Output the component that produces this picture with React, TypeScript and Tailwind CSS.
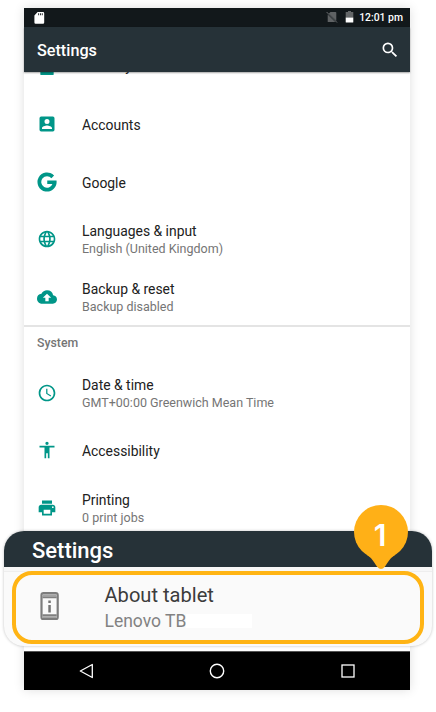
import type { ReactNode } from "react";

const TEAL = "#009688";

function Icon({ children, size = 20 }: { children: ReactNode; size?: number }) {
  return (
    <svg width={size} height={size} viewBox="0 0 24 24" fill={TEAL}>
      {children}
    </svg>
  );
}

type RowProps = {
  icon: ReactNode;
  title: string;
  subtitle?: string;
};

function Row({ icon, title, subtitle }: RowProps) {
  return (
    <div className="flex h-[57.5px] shrink-0 items-center">
      <div className="flex w-[45px] shrink-0 justify-center pb-[2px]">{icon}</div>
      <div className="pl-[13px]">
        <div className="whitespace-nowrap text-[13.900px] leading-[18px] text-[#212121]">{title}</div>
        {subtitle && (
          <div className="whitespace-nowrap text-[12.5px] leading-[18px] text-[#757575]">{subtitle}</div>
        )}
      </div>
    </div>
  );
}

function StatusBar() {
  return (
    <div className="flex h-[19px] shrink-0 items-center bg-[#12181b] pl-[9.5px] pr-[7px] text-white">
      <svg width="11" height="12" viewBox="0 0 11 12">
        <path d="M3.600 0H9a1.200 1.200 0 0 1 1.200 1.200v9.400A1.200 1.200 0 0 1 9 11.800H1.600A1.200 1.200 0 0 1 .4 10.600V3.400z" fill="#fff" />
        <path d="M4.200 1.200h.9v2h-.9zM6 1.200h.9v2H6zM7.800 1.200h.9v2h-.9z" fill="#12181b" />
      </svg>
      <div className="flex-1" />
      <svg className="-mt-0.5 mr-[7px]" width="12" height="12" viewBox="0 0 12 12">
        <path d="M4.500 1H9.500a.8.8 0 0 1 .8.8v8L2.800 2.600zM1.700 3.600 9.300 11H1.700z" fill="#5f6264" />
        <path d="M.6 1l10.400 10.500" stroke="#6b6e70" strokeWidth="1" />
      </svg>
      <svg className="-mt-0.5 mr-[5px]" width="9" height="12" viewBox="0 0 9 12">
        <path d="M3 0h3v1h2.300v5.500H.7V1H3z" fill="#646769" />
        <path d="M.7 6.500h7.600V11a.6.600 0 0 1-.6.600H1.300A.6.600 0 0 1 .7 11z" fill="#fff" />
      </svg>
      <span className="pt-[2px] text-[10.4px] font-medium leading-none">12:01 pm</span>
    </div>
  );
}

function AppBar() {
  return (
    <div className="z-10 flex h-[45px] shrink-0 items-center justify-between bg-[#263238] pl-[13px] pr-[10px] shadow-[0_1px_1.5px_rgba(0,0,0,0.35)]">
      <h1 className="pt-[4px] text-[16.200px] font-medium leading-none text-white">Settings</h1>
      <svg width="20" height="20" viewBox="0 0 24 24" fill="#fff">
        <path d="M15.500 14h-.79l-.28-.27A6.470 6.470 0 0 0 16 9.500 6.500 6.500 0 1 0 9.500 16c1.610 0 3.090-.59 4.230-1.570l.27.280v.790l5 4.990L20.490 19l-4.990-5zm-6 0C7.010 14 5 11.990 5 9.500S7.010 5 9.500 5 14 7.010 14 9.500 11.990 14 9.500 14z" />
      </svg>
    </div>
  );
}

function NavBar() {
  return (
    <div className="flex h-[39px] shrink-0 items-center justify-between border-t border-[#555] bg-black pl-[55px] pr-[54px]">
      <svg width="15" height="16" viewBox="0 0 15 16" fill="none" stroke="#fff" strokeWidth="1.300" strokeLinejoin="round">
        <path d="M13.300 1.500v13L1.300 8z" />
      </svg>
      <svg width="16" height="16" viewBox="0 0 16 16" fill="none" stroke="#fff" strokeWidth="1.400">
        <circle cx="8" cy="8" r="6.700" />
      </svg>
      <svg width="16" height="16" viewBox="0 0 16 16" fill="none" stroke="#fff" strokeWidth="1.300">
        <rect x="2" y="2" width="12" height="12" />
      </svg>
    </div>
  );
}

function Callout() {
  return (
    <section className="absolute left-[4px] top-[531px] flex h-[115px] w-[428px] flex-col overflow-hidden rounded-[20px] bg-[#fafafa] shadow-[0_0_3px_rgba(0,0,0,0.25)]">
      <div className="flex h-[36px] shrink-0 items-center bg-[#263238] pl-[28px] pt-[3px] text-[22px] font-medium leading-none text-white">
        Settings
      </div>
      <div className="h-[5px] shrink-0 border-b border-[#eeeeee] bg-[#f7f7f7]" />
      <div className="ml-[7.5px] mr-[8.5px] -mt-px flex h-[72.500px] items-center rounded-[20px] border-4 border-[#ffb414] pl-[24px]">
        <svg className="-mt-[3px]" width="20" height="28" viewBox="0 0 20 28">
          <rect x="1.500" y="1.200" width="16.200" height="26" rx="2" fill="none" stroke="#7d7d7d" strokeWidth="2.200" />
          <path d="M2.500 4.200h14.200v2H2.500zM2.500 22.200h14.200v2H2.500z" fill="#808080" />
          <path d="M2.600 2.300h14v1.900h-14zM2.600 24.200h14v1.900h-14z" fill="#a3a3a3" />
          <path d="M8.300 8.500h2.500v2.500H8.300zM8.300 13h2.500v7.500H8.300z" fill="#757575" />
        </svg>
        <div className="ml-[45px] pt-[2px]">
          <div className="whitespace-nowrap text-[20.100px] leading-[26px] text-[#3c3c3c]">About tablet</div>
          <div className="flex items-center text-[17.500px] leading-[26px] text-[#828282]">
            Lenovo TB
            <span className="h-[14px] w-[66px] bg-white" />
          </div>
        </div>
      </div>
    </section>
  );
}

function StepPin() {
  return (
    <div className="absolute left-[354px] top-[505px] h-[65px] w-[54px]">
      <svg className="absolute inset-0" width="54" height="65" viewBox="0 0 54 65">
        <circle cx="27" cy="27" r="27" fill="#ffb017" />
        <path d="M12.500 49.800C18 53 19.500 56.500 23 61.500Q27 66.500 31 61.500C34.500 56.500 36 53 41.500 49.800L27 40z" fill="#ffb017" />
      </svg>
      <span className="absolute left-0 right-[2px] top-[12px] text-center font-['Inter',sans-serif] text-[30px] font-semibold leading-[36px] text-white">1</span>
    </div>
  );
}

export default function App() {
  return (
    <main className="relative h-[712px] w-[436px] overflow-hidden bg-white px-[24px] pt-[8px] font-['Roboto',sans-serif]">
      <div className="flex h-[682px] w-[386px] flex-col bg-white shadow-[0_0_10px_rgba(0,0,0,0.13)]">
        <StatusBar />
        <AppBar />
        <div className="flex min-h-0 flex-1 flex-col overflow-hidden">
          <div className="-mt-[34.500px] mb-[1.300px] shrink-0">
            <Row title="Security" icon={<Icon><path d="M4 2h16v21a1 1 0 0 1-1 1H5a1 1 0 0 1-1-1z" /></Icon>} />
          </div>
          <Row
            title="Accounts"
            icon={<Icon><path d="M3 5v14a2 2 0 0 0 2 2h14a2 2 0 0 0 2-2V5a2 2 0 0 0-2-2H5a2 2 0 0 0-2 2zm12 4a3 3 0 1 1-6 0 3 3 0 0 1 6 0zm-9 8c0-2 4-3.100 6-3.100s6 1.100 6 3.100v1H6v-1z" /></Icon>}
          />
          <Row
            title="Google"
            icon={
              <Icon>
                <path d="M20.500 4.200A11.500 11.500 0 1 0 23.400 10.200H12.300v4.200h6.200A6.900 6.900 0 1 1 17.300 7.600z" />
              </Icon>
            }
          />
          <Row
            title="Languages & input"
            subtitle="English (United Kingdom)"
            icon={<Icon><path d="M11.990 2C6.470 2 2 6.480 2 12s4.470 10 9.990 10C17.520 22 22 17.520 22 12S17.520 2 11.990 2zm6.930 6h-2.950a15.650 15.650 0 0 0-1.380-3.560A8.030 8.030 0 0 1 18.920 8zM12 4.040c.83 1.200 1.480 2.530 1.910 3.960h-3.820c.43-1.430 1.080-2.760 1.910-3.960zM4.260 14C4.100 13.360 4 12.690 4 12s.1-1.360.26-2h3.380c-.08.66-.14 1.320-.14 2s.06 1.340.14 2H4.260zm.82 2h2.950c.32 1.250.78 2.450 1.380 3.560A7.987 7.987 0 0 1 5.080 16zm2.950-8H5.080a7.987 7.987 0 0 1 4.330-3.560A15.650 15.650 0 0 0 8.030 8zM12 19.960c-.83-1.200-1.480-2.530-1.910-3.960h3.820c-.43 1.430-1.080 2.760-1.910 3.960zM14.340 14H9.660c-.09-.66-.16-1.320-.16-2s.07-1.350.16-2h4.680c.09.65.16 1.320.16 2s-.07 1.340-.16 2zm.25 5.560c.6-1.110 1.060-2.310 1.380-3.560h2.950a8.030 8.030 0 0 1-4.330 3.560zM16.360 14c.08-.66.14-1.320.14-2s-.06-1.340-.14-2h3.380c.16.640.26 1.310.26 2s-.1 1.360-.26 2h-3.380z" /></Icon>}
          />
          <Row
            title="Backup & reset"
            subtitle="Backup disabled"
            icon={<Icon><path d="M19.350 10.040A7.490 7.490 0 0 0 12 4C9.110 4 6.600 5.640 5.350 8.040A5.994 5.994 0 0 0 0 14c0 3.310 2.690 6 6 6h13c2.760 0 5-2.240 5-5 0-2.640-2.050-4.780-4.650-4.960zM14 13v4h-4v-4H7l5-5 5 5h-3z" /></Icon>}
          />
          <div className="-mt-[1.5px] flex h-[40px] shrink-0 items-center border-t-2 border-[#e4e4e4] pb-[6px] pl-[13px] text-[12.300px] font-medium leading-none text-[#757575]">
            System
          </div>
          <Row
            title="Date & time"
            subtitle="GMT+00:00 Greenwich Mean Time"
            icon={<Icon><path d="M11.990 2C6.470 2 2 6.480 2 12s4.470 10 9.990 10C17.520 22 22 17.520 22 12S17.520 2 11.990 2zM12 20a8 8 0 1 1 0-16 8 8 0 0 1 0 16zm-.4-13H11v6l5.250 3.150.75-1.230-4.500-2.670V7z" /></Icon>}
          />
          <Row
            title="Accessibility"
            icon={<Icon><path d="M12 2a2 2 0 1 1 0 4 2 2 0 0 1 0-4zm9 7h-6v13h-2v-6h-2v6H9V9H3V7h18v2z" /></Icon>}
          />
          <Row
            title="Printing"
            subtitle="0 print jobs"
            icon={<Icon><path d="M19 8H5c-1.660 0-3 1.340-3 3v6h4v4h12v-4h4v-6c0-1.660-1.340-3-3-3zm-3 11H8v-5h8v5zm3-7a1 1 0 1 1 0-2 1 1 0 0 1 0 2zm-1-9H6v4h12V3z" /></Icon>}
          />
        </div>
        <NavBar />
      </div>
      <Callout />
      <StepPin />
    </main>
  );
}
